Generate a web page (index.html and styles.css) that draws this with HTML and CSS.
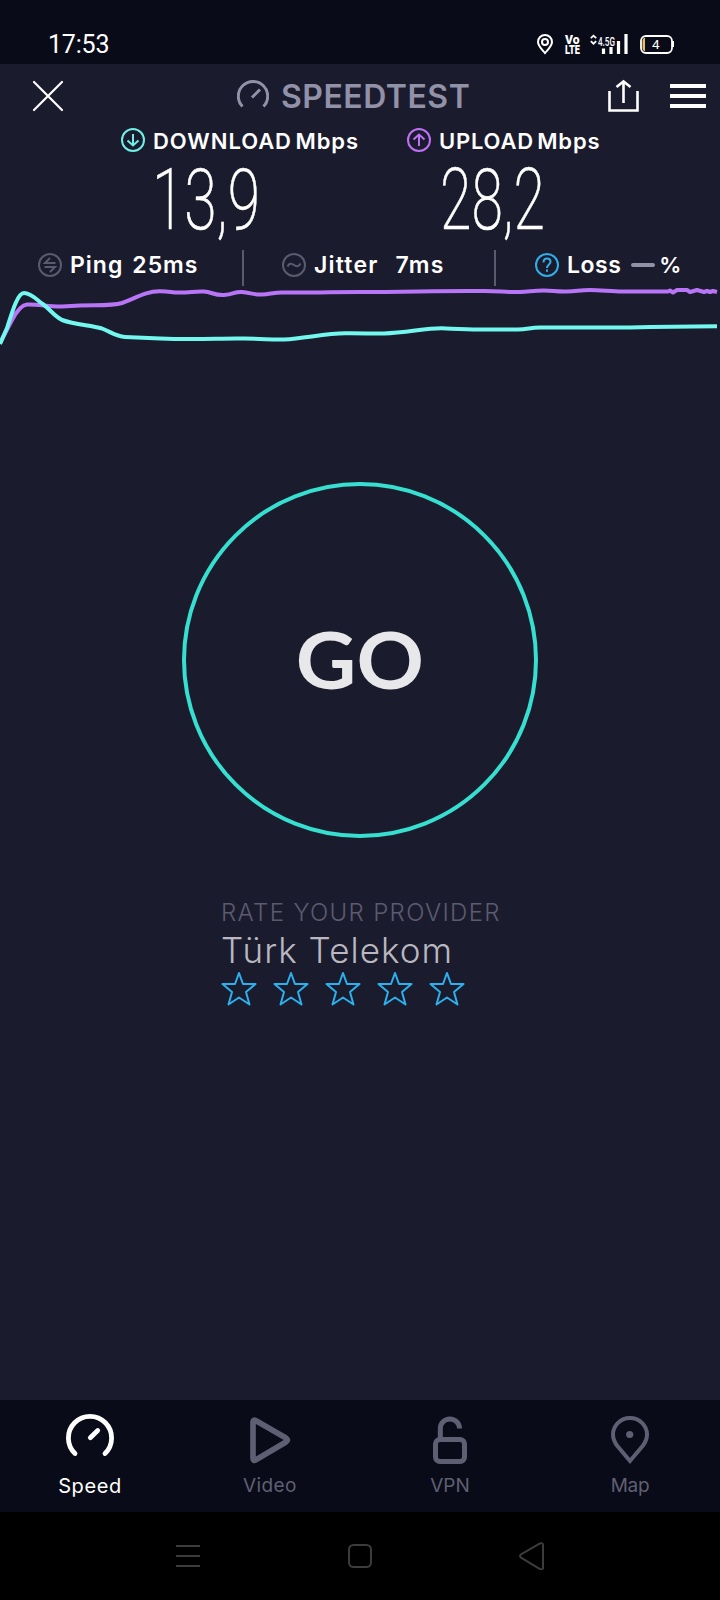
FILE: index.html
```html
<!DOCTYPE html>
<html lang="en">
<head>
<meta charset="utf-8">
<title>Speedtest</title>
<link rel="stylesheet" href="styles.css">
</head>
<body>
<div class="screen">
  <div class="status">
    <span class="clock">17:53</span>
    <svg class="status-icons" width="140" height="24" viewBox="536 32 140 24">
      <path d="M545 53C542 49.500 538 46 538 42a7 7 0 0 1 14 0C552 46 548 49.500 545 53Z" fill="none" stroke="#fff" stroke-width="2"/>
      <circle cx="545" cy="42" r="3" fill="none" stroke="#fff" stroke-width="2"/>
      <g class="tiny">
        <text x="565" y="43.500" font-size="12.500" textLength="14.500" lengthAdjust="spacingAndGlyphs">Vo</text>
        <text x="565" y="54" font-size="12.500" textLength="15" lengthAdjust="spacingAndGlyphs">LTE</text>
        <text class="net" x="598" y="45.500" font-size="13" textLength="17" lengthAdjust="spacingAndGlyphs">4.5G</text>
      </g>
      <path d="M590.800 38.200l2.700-2.500 2.700 2.500M590.800 41.200l2.700 2.500 2.700-2.500" fill="none" stroke="#fff" stroke-width="1.800"/>
      <path d="M603.500 54v-5.500M611 54v-7M618.500 54v-13M626 54v-20" stroke="#fff" stroke-width="3.200"/>
      <rect x="641" y="36" width="31" height="17" rx="5" fill="none" stroke="#fff" stroke-width="1.800"/>
      <path d="M673 41v6" stroke="#fff" stroke-width="2"/>
      <path d="M645 38v13h-1q-1.500-1-1.500-3v-7q0-2 1.500-3z" fill="#e8bf62"/>
      <text class="batt" x="652" y="49" font-size="13.500">4</text>
    </svg>
  </div>

  <div class="header">
    <svg class="close" width="32" height="32" viewBox="32 80 32 32"><path d="M34 82l28 28M62 82l-28 28" stroke="#fff" stroke-width="2.200" stroke-linecap="round"/></svg>
    <div class="logo">
      <svg width="32" height="32" viewBox="237 80 32 32" fill="none" stroke="#9191a8" stroke-width="3"><path d="M242.500 106.500A14.700 14.700 0 1 1 263.500 106.500M252 97.500l8-8"/></svg>
      <span class="brand">SPEEDTEST</span>
    </div>
    <svg class="share" width="32" height="34" viewBox="607 79 32 34" fill="none" stroke="#fff" stroke-width="2.600"><path d="M609.500 91v19.500h28V91M623.500 103V82M616.500 87l7-5.500 7 5.500"/></svg>
    <svg width="36" height="24" viewBox="0 0 36 24"><path d="M0 2h36M0 12h36M0 22h36" stroke="#fff" stroke-width="4"/></svg>
  </div>

  <div class="results">
    <div class="result">
      <div class="caption"><svg width="24" height="24" fill="none" stroke="#6ff0e6" stroke-width="2"><circle cx="12" cy="12" r="11"/><path d="M12 6v12M6.500 12.500l5.500 5 5.500-5"/></svg><span class="down-label">DOWNLOAD Mbps</span></div>
      <svg class="value" width="120" height="76" viewBox="150 162 120 76"><text x="152" y="229" textLength="108" lengthAdjust="spacingAndGlyphs">13,9</text></svg>
    </div>
    <div class="result">
      <div class="caption"><svg width="24" height="24" fill="none" stroke="#bf71f5" stroke-width="2"><circle cx="12" cy="12" r="11"/><path d="M12 18V6M6.500 11.500l5.500-5 5.500 5"/></svg><span class="up-label">UPLOAD Mbps</span></div>
      <svg class="value" width="120" height="76" viewBox="436 162 120 76"><text x="440" y="229" textLength="105" lengthAdjust="spacingAndGlyphs">28,2</text></svg>
    </div>
  </div>

  <div class="stats">
    <div class="stat ping">
      <svg width="24" height="24" fill="none" stroke="#5b5b70" stroke-width="2"><circle cx="12" cy="12" r="11"/><path d="M17.500 10H7l5-5M6.500 14H17l-5 5M12 10h5.500"/></svg>
      <span class="name">Ping</span><span class="num">25ms</span>
    </div>
    <div class="stat jitter">
      <svg width="24" height="24" fill="none" stroke="#5b5b70" stroke-width="2"><circle cx="12" cy="12" r="11"/><path d="M5.500 13.500c1.500-3.500 4-3.500 6.500-1.500s5 1.500 6.500-1.500"/></svg>
      <span class="name">Jitter</span><span class="num">7ms</span>
    </div>
    <div class="stat loss">
      <svg width="24" height="24" fill="none" stroke="#31aee8" stroke-width="2"><circle cx="12" cy="12" r="11"/><path d="M8.500 9.500c0-2.500 1.500-4 3.500-4s3.500 1.300 3.500 3.300c0 2.700-3.500 2.700-3.500 6.200M12 16.500v2.200"/></svg>
      <span class="name">Loss</span><span class="dash"></span><span class="pct">%</span>
    </div>
  </div>

  <svg class="chart" width="720" height="60" viewBox="0 286 720 60" fill="none" stroke-width="4" stroke-linejoin="round">
    <path stroke="#b975f7" d="M0 343L12 320Q20 305 27 304.500C38 304 50 307 62 306.500L80 305.500C100 305 112 306 122 303C136 298 146 291 160 291.300C172 291.500 170 292.500 180 292.500S196 291 204 291.500S214 295.500 224 295S234 291.500 242 292S254 295 262 294.500S274 292.500 282 292.500C310 293 320 292 360 292C410 292 440 290.500 485 291C500 291 506 292.500 520 292C530 291.500 534 290.500 544 290.500S556 292 567 291.500S580 290 590 290S612 291.500 622 291.500H668L670 290.500L673 292.500L677 290H687L690 292L697 290L704 292L707 291L710 292L713 291L717 292"/>
    <path stroke="#73f8ef" d="M0 344L7 328C13 309 18 293 24 293C31 293 36 299 42 303.500C50 309 54 316 62 320C76 325 90 325 102 328.500C111 332 116 336.500 125 337L160 338.500C200 340 220 338 244 338.500C264 338.500 270 340 284 339.500C306 338 326 333.500 345 333.300C364 333 372 334 384 333.500C406 333 426 328 442 328.300C458 329 464 329.500 480 329.500H518C527 329.500 530 327.700 540 327.500H630Q670 326.500 717 326.300"/>
  </svg>

  <div class="go-wrap"><div class="go"><span>GO</span></div></div>

  <div class="rate">
    <div class="rate-title">RATE YOUR PROVIDER</div>
    <div class="provider">Türk Telekom</div>
    <div class="stars">
      <svg class="star" viewBox="0 0 36 36"><path d="M18 2l4 11h12.500l-9.500 8 3.500 12.500-10.500-7-10.500 7L11 21l-9.500-8H14z"/></svg>
      <svg class="star" viewBox="0 0 36 36"><path d="M18 2l4 11h12.500l-9.500 8 3.500 12.500-10.500-7-10.500 7L11 21l-9.500-8H14z"/></svg>
      <svg class="star" viewBox="0 0 36 36"><path d="M18 2l4 11h12.500l-9.500 8 3.500 12.500-10.500-7-10.500 7L11 21l-9.500-8H14z"/></svg>
      <svg class="star" viewBox="0 0 36 36"><path d="M18 2l4 11h12.500l-9.500 8 3.500 12.500-10.500-7-10.500 7L11 21l-9.500-8H14z"/></svg>
      <svg class="star" viewBox="0 0 36 36"><path d="M18 2l4 11h12.500l-9.500 8 3.500 12.500-10.500-7-10.500 7L11 21l-9.500-8H14z"/></svg>
    </div>
  </div>

  <div class="tabs">
    <div class="tab active">
      <svg width="52" height="52" viewBox="64 1412 52 52" stroke-width="4.800" stroke-linecap="round"><path d="M75 1453.500A21.600 21.600 0 1 1 105 1453.500M90.300 1437.700l7.400-7.200"/></svg>
      <span>Speed</span>
    </div>
    <div class="tab video">
      <svg width="52" height="52" viewBox="244 1412 52 52" stroke-width="5.600" stroke-linejoin="round"><path d="M253 1422v36.500q0 3 3 1.300l30-17.800q3-2 0-4l-30-17.200q-3-1.700-3 1.200z"/></svg>
      <span>Video</span>
    </div>
    <div class="tab vpn">
      <svg width="52" height="52" viewBox="424 1412 52 52" stroke-width="5"><path d="M440.300 1438v-9.500a9.600 9.600 0 0 1 19.200 0"/><rect x="435.500" y="1439.500" width="29" height="22" rx="4.500"/></svg>
      <span>VPN</span>
    </div>
    <div class="tab map">
      <svg width="52" height="52" viewBox="604 1412 52 52" stroke-width="4"><path d="M630 1461L617 1445.500C614.500 1442 613 1438.500 613 1434.500a17 16.500 0 0 1 34 0C647 1438.500 645.500 1442 643 1445.500Z"/><circle cx="629.700" cy="1434.500" r="3.600" fill="#5f5f73" stroke="none"/></svg>
      <span>Map</span>
    </div>
  </div>

  <div class="sysnav">
    <svg width="24" height="28" viewBox="0 0 24 28"><path d="M0 4h24M0 14h24M0 24h24"/></svg>
    <svg width="24" height="28" viewBox="0 0 24 28"><rect x="1" y="3" width="22" height="22" rx="4.500"/></svg>
    <svg width="26" height="28" viewBox="0 0 26 28"><path d="M2 12.300L21 1.500q3-1.200 3 1.500v22.500q0 3-3 1.500L2 15.700q-2-1.700 0-3.400z"/></svg>
  </div>
</div>
</body>
</html>
```

FILE: styles.css
```css
* { box-sizing: border-box; }
body { margin: 0; background: #1b1b2e; }
svg { display: block; flex: none; }

.screen {
  width: 720px;
  height: 1600px;
  display: flex;
  flex-direction: column;
  background: #1b1b2e;
  color: #fff;
  font-family: Inter, "Open Sans", sans-serif;
  white-space: nowrap;
  overflow: hidden;
}

.status {
  height: 64px;
  padding: 32px 44px 0 48px;
  background: #0a0b18;
  display: flex;
  justify-content: space-between;
}
.clock { font: 400 25px/26px Roboto, sans-serif; letter-spacing: -0.2px; }
.status-icons text { fill: #fff; }
.tiny { font-family: Roboto, sans-serif; font-weight: 900; }
.tiny .net { font-weight: 500; }
.batt { font-family: Roboto, sans-serif; }

.header {
  height: 62px;
  padding: 2px 14px 0 32px;
  display: flex;
  align-items: center;
}
.logo { margin-left: 173px; display: flex; align-items: center; gap: 12px; color: #9191a8; }
.brand { font-size: 32px; line-height: 36px; font-weight: 600; letter-spacing: 0.5px; padding-top: 2px; }
.share { margin: 0 31px 0 auto; }

.results { height: 114px; padding-left: 121px; display: flex; }
.result { width: 286px; }
.caption { height: 28px; display: flex; align-items: center; gap: 8px; font-size: 22px; font-weight: 600; word-spacing: -3px; }
.caption span { line-height: 26px; padding-top: 2px; }
.down-label { letter-spacing: 0.95px; }
.up-label { letter-spacing: 0.8px; }
.value { margin: 8px 0 0 29px; overflow: visible; }
.value text { font-family: Roboto, sans-serif; font-weight: 200; font-size: 86px; fill: #fff; stroke: #fff; stroke-width: 0.6px; }

.stats { height: 46px; padding-top: 10px; display: flex; font-size: 23px; font-weight: 600; }
.stat { height: 36px; display: flex; align-items: center; padding-bottom: 6px; }
.stat svg { margin-right: 8px; }
.ping { width: 242px; padding-left: 38px; letter-spacing: 1px; }
.jitter { width: 252px; padding-left: 38px; border-left: 2px solid #5b5b70; letter-spacing: 1.2px; }
.loss { flex: 1; padding-left: 39px; border-left: 2px solid #5b5b70; letter-spacing: 0.5px; }
.ping .num { margin-left: 9px; }
.jitter .num { margin-left: 17px; }
.dash { width: 24px; height: 4px; border-radius: 2px; background: #9191a8; margin: 0 4px 0 10px; }
.pct { letter-spacing: 0; font-size: 22px; }

.chart { height: 60px; overflow: visible; }

.go-wrap { padding-top: 136px; height: 494px; display: flex; justify-content: center; }
.go {
  width: 356px;
  height: 356px;
  border: 4px solid #36dfcf;
  border-radius: 50%;
  display: flex;
  align-items: center;
  justify-content: center;
  color: #e8e7ea;
  font: 700 78px/80px Lato, sans-serif;
}
.go span { transform: scaleX(1.07); padding-bottom: 2px; }

.rate { flex: 1; padding: 59px 0 0 221px; }
.rate-title { font-size: 24px; line-height: 28px; font-weight: 300; color: #5b5b70; letter-spacing: 1.35px; }
.provider { font-size: 35px; line-height: 40px; margin-top: 3px; font-weight: 300; color: #b9b8c0; letter-spacing: 1.05px; }
.stars { display: flex; gap: 16px; margin-top: 1px; }
.star { width: 36px; height: 36px; fill: none; stroke: #2bb1ee; stroke-width: 2; stroke-linejoin: round; }

.tabs { height: 112px; display: grid; grid-template-columns: repeat(4, 1fr); background: #0a0b18; }
.tab { display: flex; flex-direction: column; align-items: center; padding-top: 12px; color: #5f5f73; font-size: 19px; }
.tab svg { fill: none; stroke: #5f5f73; overflow: visible; }
.tab.active { color: #fff; font-size: 20px; letter-spacing: 0.6px; }
.tab.active svg { stroke: #fff; }
.tab span { line-height: 24px; margin-top: 10px; }
.video span { letter-spacing: 0.4px; }
.map span { letter-spacing: -0.4px; }

.sysnav { height: 88px; padding: 0 175px 0 176px; background: #000; display: flex; align-items: center; justify-content: space-between; }
.sysnav svg { fill: none; stroke: #3c3c3c; stroke-width: 2; }
```
